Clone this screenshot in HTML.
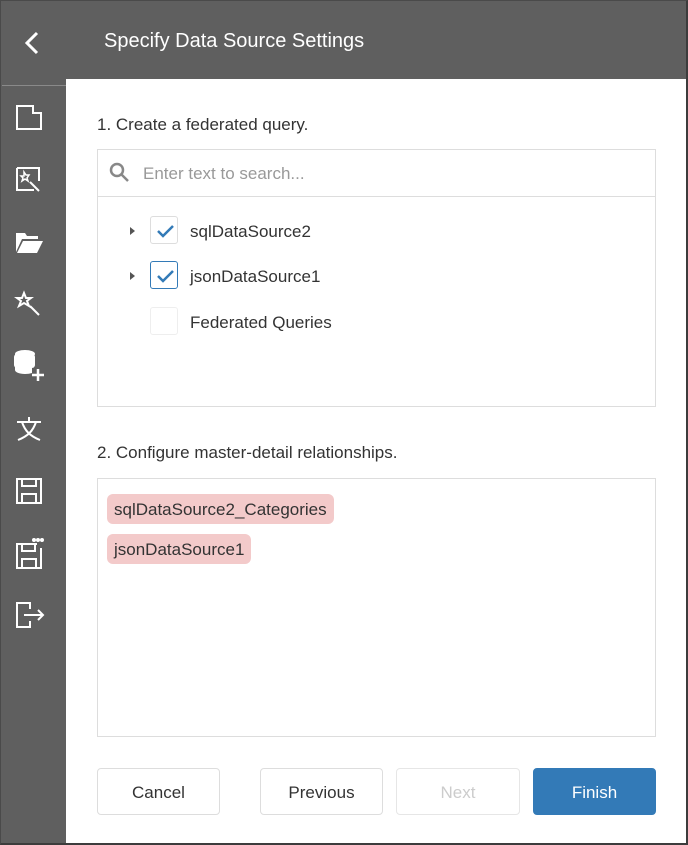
<!DOCTYPE html>
<html><head><style>
*{box-sizing:border-box;margin:0;padding:0}
body{width:688px;height:845px;background:#5f5f5f;font-family:"Liberation Sans",sans-serif;position:relative;overflow:hidden;color:#333}
.frame{position:absolute;left:0;top:0;width:688px;height:845px;border:1px solid #4a4a4a;border-right:2px solid #3c3c3c;border-bottom:2px solid #3c3c3c;pointer-events:none}
.title{position:absolute;left:104px;top:30px;color:#fff;font-size:20px}
.sep{position:absolute;left:2px;top:85px;width:64px;height:1px;background:#8a8a8a}
.main{position:absolute;left:66px;top:79px;width:620px;height:764px;background:#fff}
.abs{position:absolute}
.lbl{font-size:17px;color:#333}
.box{position:absolute;border:1px solid #ddd;background:#fff}
.cb{position:absolute;width:28px;height:28px;border:1px solid #ddd;border-radius:3px;background:#fff}
.cb svg{position:absolute;left:4px;top:4px}
.tri{position:absolute;width:0;height:0;border-left:5px solid #555;border-top:4px solid transparent;border-bottom:4px solid transparent}
.tag{position:absolute;background:#f3caca;border-radius:6px;font-size:17px;padding:0 7px;height:30px;line-height:31px;color:#333}
.btn{position:absolute;top:768px;height:47px;border:1px solid #ddd;border-radius:4px;background:#fff;text-align:center;line-height:47px;font-size:17px;color:#333}
svg.ic{position:absolute;left:14px}
</style></head><body>
<svg class="abs" style="left:22px;top:31px" width="20" height="24" viewBox="0 0 20 24"><path d="M15 2 L5 12 L15 22" stroke="#fff" stroke-width="3" fill="none"/></svg>
<div class="title">Specify Data Source Settings</div>
<div class="sep"></div>
<svg class="ic" style="top:103px" width="30" height="30" viewBox="0 0 30 30" fill="none" stroke="#fff" stroke-width="2"><path d="M3 3H19V10H27V26H3Z"/></svg>
<svg class="ic" style="top:165px" width="30" height="30" viewBox="0 0 30 30" fill="none" stroke="#fff" stroke-width="2"><path d="M3 3H25V16M20 25H3V3"/><path d="M10 7l2 3h3l-2 3 1 3-3-2-3 2 1-3-2-2h3z" stroke-width="1.5"/><path d="M16 17l9 9" /></svg>
<svg class="ic" style="top:228px" width="30" height="30" viewBox="0 0 30 30" fill="#fff"><path d="M2 5h9l2 3h11v3H8L2 24z"/><path d="M9 13h20l-6 12H3z"/></svg>
<svg class="ic" style="top:289px" width="30" height="30" viewBox="0 0 30 30" fill="none" stroke="#fff" stroke-width="2"><path d="M10 4l2 5h5l-4 3 2 5-5-3-5 3 2-5-4-3h5z"/><path d="M16 17l9 9"/></svg>
<svg class="ic" style="top:348px" width="34" height="36" viewBox="0 0 34 36" fill="#fff"><ellipse cx="11" cy="6" rx="10" ry="4"/><path d="M1 6v16c0 2 4 4 10 4 3 0 5-.5 7-1V6z"/><rect x="0" y="6" width="21" height="14" rx="3"/><path d="M24 21v12M18 27h12" stroke="#fff" stroke-width="2.5"/></svg>
<svg class="ic" style="top:415px" width="30" height="30" viewBox="0 0 30 30" fill="none" stroke="#fff" stroke-width="2"><path d="M15 2v5M3 7h24M8 7c3 9 8 14 18 18M22 7c-3 9-8 14-18 18"/></svg>
<svg class="ic" style="top:476px" width="30" height="30" viewBox="0 0 30 30" fill="none" stroke="#fff" stroke-width="2"><path d="M3 3H27V27H3Z"/><path d="M8 3V10H22V3M8 27V18H22V27"/></svg>
<svg class="ic" style="top:538px" width="30" height="32" viewBox="0 0 30 32" fill="none" stroke="#fff" stroke-width="2"><path d="M23 6H3V30H27V10"/><path d="M8 6V13H21V6M8 30V21H22V30"/><circle cx="20" cy="2" r="1" fill="#fff"/><circle cx="24" cy="2" r="1" fill="#fff"/><circle cx="28" cy="2" r="1" fill="#fff"/></svg>
<svg class="ic" style="top:600px" width="32" height="30" viewBox="0 0 32 30" fill="none" stroke="#fff" stroke-width="2"><path d="M16 9V3H3V27H16V21"/><path d="M10 15H29M24 10l5 5-5 5"/></svg>

<div class="main"></div>
<div class="abs lbl" style="left:97px;top:115px">1. Create a federated query.</div>
<div class="box" style="left:97px;top:149px;width:559px;height:258px"></div>
<div class="abs" style="left:98px;top:196px;width:557px;height:1px;background:#ddd"></div>
<svg class="abs" style="left:109px;top:162px" width="22" height="22" viewBox="0 0 22 22" fill="none" stroke="#888" stroke-width="2.5"><circle cx="8" cy="8" r="6"/><path d="M12.5 12.5L19 19"/></svg>
<div class="abs" style="left:143px;top:164px;font-size:17px;color:#999">Enter text to search...</div>
<div class="tri" style="left:130px;top:227px"></div>
<div class="cb" style="left:150px;top:216px"><svg width="20" height="20" viewBox="0 0 20 20"><path d="M3 10l5 5 10-10" stroke="#337ab7" stroke-width="2.5" fill="none"/></svg></div>
<div class="abs lbl" style="left:190px;top:222px">sqlDataSource2</div>
<div class="tri" style="left:130px;top:272px"></div>
<div class="cb" style="left:150px;top:261px;border-color:#337ab7"><svg width="20" height="20" viewBox="0 0 20 20"><path d="M3 10l5 5 10-10" stroke="#337ab7" stroke-width="2.5" fill="none"/></svg></div>
<div class="abs lbl" style="left:190px;top:267px">jsonDataSource1</div>
<div class="cb" style="left:150px;top:307px;border-color:#eee"></div>
<div class="abs lbl" style="left:190px;top:313px">Federated Queries</div>

<div class="abs lbl" style="left:97px;top:443px">2. Configure master-detail relationships.</div>
<div class="box" style="left:97px;top:478px;width:559px;height:259px"></div>
<div class="tag" style="left:107px;top:494px">sqlDataSource2_Categories</div>
<div class="tag" style="left:107px;top:534px">jsonDataSource1</div>

<div class="btn" style="left:97px;width:123px">Cancel</div>
<div class="btn" style="left:260px;width:123px">Previous</div>
<div class="btn" style="left:396px;width:124px;color:#ccc;border-color:#e6e6e6">Next</div>
<div class="btn" style="left:533px;width:123px;background:#337ab7;border-color:#337ab7;color:#fff">Finish</div>
<div class="frame"></div>
</body></html>
